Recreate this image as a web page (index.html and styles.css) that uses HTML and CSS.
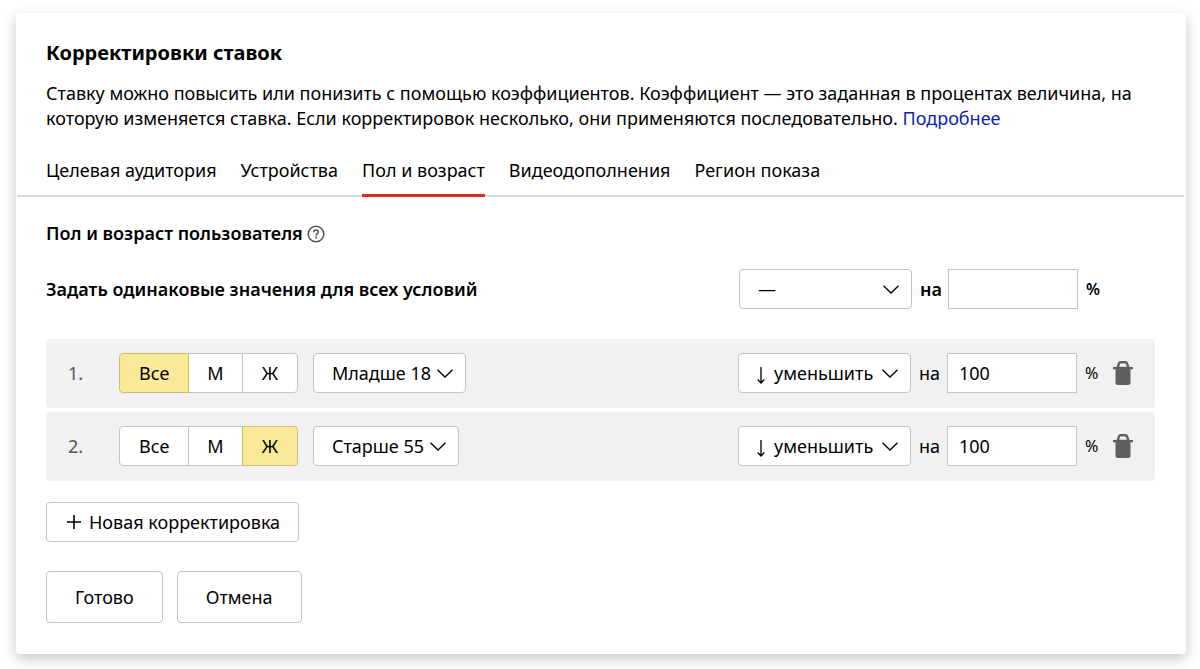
FILE: index.html
```html
<!DOCTYPE html>
<html lang="ru">
<head>
<meta charset="utf-8">
<meta name="viewport" content="width=device-width, initial-scale=1">
<title>Корректировки ставок</title>
<link rel="stylesheet" href="styles.css">
</head>
<body>
<main class="card">
  <header class="intro">
    <h1 class="title">Корректировки ставок</h1>
    <p class="lead">Ставку можно повысить или понизить с помощью коэффициентов. Коэффициент — это заданная в процентах величина, на которую изменяется ставка. Если корректировок несколько, они применяются последовательно. <a class="link" href="#more">Подробнее</a></p>
  </header>

  <nav class="tabs">
    <a class="tab" href="#audience">Целевая аудитория</a>
    <a class="tab" href="#devices">Устройства</a>
    <a class="tab tab-active" href="#gender-age" aria-current="page">Пол и возраст</a>
    <a class="tab" href="#video">Видеодополнения</a>
    <a class="tab" href="#region">Регион показа</a>
  </nav>

  <form class="content">
    <div class="heading">
      <h2 class="subtitle">Пол и возраст пользователя</h2>
      <button class="icon-button" type="button" aria-label="Справка">
        <svg width="18" height="18" viewBox="0 0 18 18" fill="none" stroke="#555" stroke-width="1.6"><circle cx="9" cy="9" r="7.8"/><path d="M6.7 7.2C6.7 5.8 7.7 5 9 5s2.3.8 2.3 2c0 1.6-2.2 1.7-2.2 3.5"/><path d="M9.1 11.6v1.8"/></svg>
      </button>
    </div>

    <div class="common">
      <h2 class="subtitle">Задать одинаковые значения для всех условий</h2>
      <div class="bid">
        <span class="picker picker-wide">
          <select class="select" aria-label="Действие для всех условий"><option>—</option></select>
          <svg class="chevron" width="16" height="9" viewBox="0 0 16 9"><path d="M.5.7 8 8 15.500.7"/></svg>
        </span>
        <label class="word" for="all-value">на</label>
        <input class="amount" id="all-value" type="text">
        <span class="percent">%</span>
      </div>
    </div>

    <ol class="rules">
      <li class="rule">
        <span class="number">1.</span>
        <div class="segments" role="radiogroup" aria-label="Пол">
          <label class="segment"><input class="radio" type="radio" name="gender-1" checked>Все</label>
          <label class="segment"><input class="radio" type="radio" name="gender-1">М</label>
          <label class="segment"><input class="radio" type="radio" name="gender-1">Ж</label>
        </div>
        <span class="picker">
          <select class="select select-age" aria-label="Возраст"><option>Младше 18</option></select>
          <svg class="chevron" width="16" height="9" viewBox="0 0 16 9"><path d="M.5.7 8 8 15.500.7"/></svg>
        </span>
        <div class="bid">
          <span class="picker picker-wide">
            <svg class="arrow" width="8" height="17" viewBox="0 0 8 17"><path d="M4 0v16M.7 12.500 4 16l3.300-3.500"/></svg>
            <select class="select select-arrow" aria-label="Действие"><option>уменьшить</option></select>
            <svg class="chevron" width="16" height="9" viewBox="0 0 16 9"><path d="M.5.7 8 8 15.500.7"/></svg>
          </span>
          <label class="word" for="value-1">на</label>
          <input class="amount" id="value-1" type="text" value="100">
          <span class="percent">%</span>
          <button class="icon-button" type="button" aria-label="Удалить">
            <svg width="20" height="24" viewBox="0 0 20 24" fill="#5f5f5f"><path fill-rule="evenodd" d="M3.500 6 4.800 2.300Q5.500 0 7.800 0h4.400q2.300 0 3 2.300L16.500 6H20v2.200h-2.500v13.300Q17.500 24 15 24H5q-2.500 0-2.500-2.500V8.200H0V6zM6.200 5.800h7.600l-.9-3.300H7.100z"/></svg>
          </button>
        </div>
      </li>
      <li class="rule">
        <span class="number">2.</span>
        <div class="segments" role="radiogroup" aria-label="Пол">
          <label class="segment"><input class="radio" type="radio" name="gender-2">Все</label>
          <label class="segment"><input class="radio" type="radio" name="gender-2">М</label>
          <label class="segment"><input class="radio" type="radio" name="gender-2" checked>Ж</label>
        </div>
        <span class="picker">
          <select class="select select-age" aria-label="Возраст"><option>Старше 55</option></select>
          <svg class="chevron" width="16" height="9" viewBox="0 0 16 9"><path d="M.5.7 8 8 15.500.7"/></svg>
        </span>
        <div class="bid">
          <span class="picker picker-wide">
            <svg class="arrow" width="8" height="17" viewBox="0 0 8 17"><path d="M4 0v16M.7 12.500 4 16l3.300-3.500"/></svg>
            <select class="select select-arrow" aria-label="Действие"><option>уменьшить</option></select>
            <svg class="chevron" width="16" height="9" viewBox="0 0 16 9"><path d="M.5.7 8 8 15.500.7"/></svg>
          </span>
          <label class="word" for="value-2">на</label>
          <input class="amount" id="value-2" type="text" value="100">
          <span class="percent">%</span>
          <button class="icon-button" type="button" aria-label="Удалить">
            <svg width="20" height="24" viewBox="0 0 20 24" fill="#5f5f5f"><path fill-rule="evenodd" d="M3.500 6 4.800 2.300Q5.500 0 7.800 0h4.400q2.300 0 3 2.300L16.500 6H20v2.200h-2.500v13.300Q17.500 24 15 24H5q-2.500 0-2.500-2.500V8.200H0V6zM6.200 5.800h7.600l-.9-3.300H7.100z"/></svg>
          </button>
        </div>
      </li>
    </ol>

    <button class="button button-add" type="button">
      <svg width="14" height="14" viewBox="0 0 14 14" fill="none" stroke="#000" stroke-width="1.600"><path d="M7 0v14M0 7h14"/></svg>
      Новая корректировка
    </button>

    <div class="actions">
      <button class="button button-large" type="submit">Готово</button>
      <button class="button button-large" type="button">Отмена</button>
    </div>
  </form>
</main>
</body>
</html>
```

FILE: styles.css
```css
* {
  box-sizing: border-box;
}

body {
  margin: 0;
  padding: 13px 14px 15px 16px;
  background: #fff;
  color: #000;
  font: 18px/25px "Noto Sans", sans-serif;
}

button,
input,
select {
  margin: 0;
  color: inherit;
  font: inherit;
}

svg {
  display: block;
}

.card {
  padding: 27px 0 31px;
  border-radius: 4px;
  background: #fff;
  box-shadow: 0 5px 14px rgba(0, 0, 0, 0.22);
}

.intro {
  padding: 0 30px;
}

.title {
  margin: 0 0 16px;
  font-size: 20px;
  font-weight: 700;
}

.lead {
  margin: 0;
}

.link {
  color: #0a22b4;
  text-decoration: none;
}

.tabs {
  display: flex;
  gap: 24px;
  margin: 27px 2px 0 1px;
  padding: 0 29px;
  border-bottom: 2px solid #d9d9d9;
}

.tab {
  height: 39px;
  margin-bottom: -2px;
  border-bottom: 3px solid transparent;
  color: inherit;
  text-decoration: none;
}

.tab-active {
  border-color: #dc2a1b;
}

.content {
  padding: 24px 31px 0 30px;
}

.heading {
  display: flex;
  align-items: center;
  gap: 4px;
}

.subtitle {
  margin: 0;
  font-size: 18px;
  font-weight: 600;
}

.icon-button {
  padding: 0;
  border: 0;
  background: none;
}

.common {
  display: flex;
  align-items: center;
  justify-content: space-between;
  margin: 23px 0 30px;
  padding-right: 55px;
  font-weight: 600;
}

.bid {
  display: flex;
  align-items: center;
  gap: 8px;
}

.picker {
  display: grid;
  align-items: center;
}

.picker > * {
  grid-area: 1 / 1;
}

.picker-wide {
  width: 173px;
}

.select {
  width: 100%;
  height: 40px;
  padding: 0 40px 0 18px;
  appearance: none;
  border: 1px solid #c4c4c4;
  border-radius: 4px;
  background: #fff;
  font-weight: 400;
}

.select-age {
  padding-right: 33px;
}

.select-arrow {
  padding-left: 35px;
  padding-right: 30px;
}

.chevron,
.arrow {
  z-index: 1;
  fill: none;
  stroke: #000;
  stroke-width: 1.3;
  pointer-events: none;
}

.chevron {
  justify-self: end;
  margin-right: 13px;
}

.arrow {
  justify-self: start;
  margin-top: 4px;
  margin-left: 19px;
}

.word {
  width: 20px;
}

.amount {
  width: 130px;
  height: 40px;
  padding: 0 11px;
  border: 1px solid #c4c4c4;
  border-radius: 0;
  background: #fff;
}

.percent {
  width: 14px;
  font-size: 16px;
}

.rules {
  display: grid;
  gap: 4px;
  margin: 0 0 21px;
  padding: 0;
  list-style: none;
}

.rule {
  display: flex;
  align-items: center;
  padding: 14px 22px 15px;
  border-radius: 4px;
  background: #f1f1f1;
}

.rule .bid {
  margin-left: auto;
}

.rule .icon-button {
  margin-left: 6px;
}

.number {
  width: 51px;
  color: #555;
}

.segments {
  display: flex;
  margin-right: 15px;
}

.segment {
  display: flex;
  align-items: center;
  height: 40px;
  padding: 0 19px;
  border: 1px solid #c4c4c4;
  background: #fff;
}

.segment + .segment {
  margin-left: -1px;
}

.segment:first-child {
  border-radius: 4px 0 0 4px;
}

.segment:nth-child(2) {
  padding: 0 18px;
}

.segment:last-child {
  border-radius: 0 4px 4px 0;
}

.segment:has(:checked) {
  z-index: 1;
  border-color: #cdbb78;
  background: #fbe99a;
}

.radio {
  width: 0;
  height: 0;
  margin: 0;
  appearance: none;
}

.button {
  display: flex;
  align-items: center;
  height: 40px;
  border: 1px solid #c4c4c4;
  border-radius: 4px;
  background: #fff;
}

.button-add {
  gap: 8px;
  padding: 0 18px 0 20px;
}

.actions {
  display: flex;
  gap: 14px;
  margin-top: 29px;
}

.button-large {
  height: 52px;
  padding: 0 28px;
}
```
